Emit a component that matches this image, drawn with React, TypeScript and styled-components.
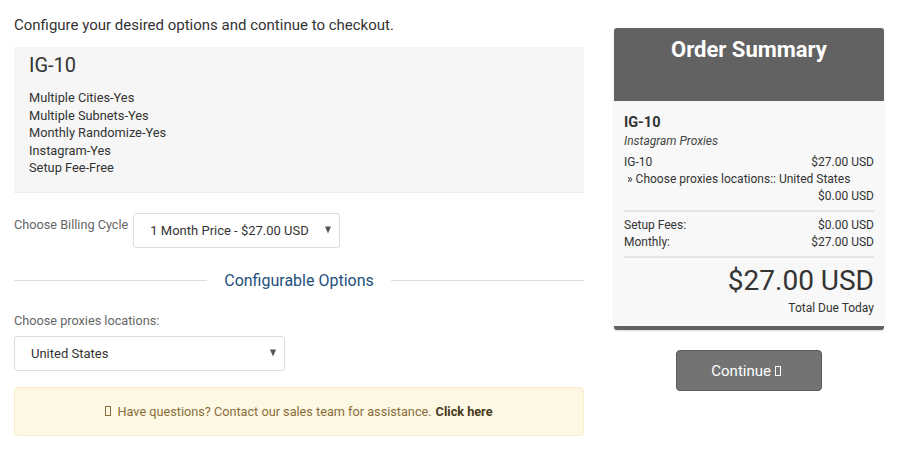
import React from "react";
import styled, { createGlobalStyle } from "styled-components";

const Global = createGlobalStyle`
  html, body { margin: 0; padding: 0; background: #fff; }
  body { font-family: Roboto, "Noto Sans", Arial, sans-serif; color: #333; }
  * { box-sizing: border-box; }
`;

const Page = styled.div`
  display: flex;
  gap: 30px;
  padding: 14px 16px 0 14px;
  width: 900px;
`;

const Main = styled.div`
  width: 570px;
  display: flex;
  flex-direction: column;
`;

const Intro = styled.p`
  margin: 0 0 11px;
  font-size: 15px;
  line-height: 22px;
  color: #333;
`;

const ProductBox = styled.div`
  background: #f6f6f6;
  padding: 4px 15px 15px;
  border-bottom: 1px solid #eee;
`;

const ProductName = styled.h2`
  margin: 0 0 10px;
  font-size: 20px;
  font-weight: 400;
  line-height: 28px;
  color: #333;
`;

const Feature = styled.div`
  font-size: 12.8px;
  line-height: 17.5px;
  color: #333;
`;

const BillingRow = styled.div`
  display: flex;
  align-items: flex-start;
  margin-top: 20px;
`;

const FieldLabel = styled.label`
  font-size: 12.7px;
  color: #666;
  line-height: 18px;
  margin-top: 3px;
  margin-right: 5px;
`;

const SelectBox = styled.div<{ $w: number }>`
  position: relative;
  width: ${(p) => p.$w}px;
  height: 35px;
  border: 1px solid #ddd;
  border-radius: 3px;
  background: #fff;
  display: flex;
  align-items: center;
  padding-left: 16px;
  font-size: 13px;
  color: #333;
`;

const Caret = styled.span`
  position: absolute;
  right: 8px;
  top: 50%;
  transform: translateY(-50%);
  width: 0;
  height: 0;
  border-left: 3.5px solid transparent;
  border-right: 3.5px solid transparent;
  border-top: 7px solid #555;
`;

const Divider = styled.div`
  display: flex;
  align-items: center;
  gap: 17px;
  margin-top: 23px;
  height: 20px;
`;

const Rule = styled.div`
  flex: 1;
  height: 1px;
  background: #ddd;
`;

const DividerTitle = styled.span`
  font-size: 16px;
  color: #1d4f7c;
`;

const LocLabel = styled.div`
  font-size: 12.7px;
  color: #666;
  line-height: 18px;
  margin-top: 21px;
  margin-bottom: 6px;
`;

const Alert = styled.div`
  margin-top: 16px;
  height: 49px;
  background: #fcf8e3;
  border: 1px solid #faebcc;
  border-radius: 4px;
  display: flex;
  align-items: center;
  justify-content: center;
  font-size: 12.7px;
  color: #8a6d3b;
`;

const Strong = styled.strong`
  color: #4a3a20;
  font-weight: 700;
  margin-left: 4px;
`;

const Tofu = styled.span<{ $c: string }>`
  display: inline-block;
  width: 6px;
  height: 10px;
  border: 1px solid ${(p) => p.$c};
  margin: 0 6px 0 0;
  vertical-align: -1px;
`;

const Side = styled.div`
  width: 270px;
  margin-top: 14px;
  display: flex;
  flex-direction: column;
  align-items: center;
`;

const Summary = styled.div`
  width: 270px;
  border-radius: 3px;
  overflow: hidden;
  background: #f8f8f8;
  border-bottom: 4px solid #626262;
  box-shadow: 0 1px 2px rgba(0, 0, 0, 0.15);
`;

const SummaryHead = styled.div`
  background: #626262;
  height: 73px;
  color: #fff;
  text-align: center;
  font-size: 22px;
  font-weight: 700;
  padding-top: 8px;
  line-height: 28px;
`;

const SummaryBody = styled.div`
  padding: 12px 10px 10px;
  font-size: 12px;
  color: #333;
`;

const SumTitle = styled.div`
  font-size: 14.5px;
  font-weight: 700;
  line-height: 19px;
`;

const SumSub = styled.div`
  font-style: italic;
  font-size: 12px;
  color: #444;
  line-height: 18px;
  margin-bottom: 4px;
`;

const Line = styled.div<{ $indent?: boolean }>`
  display: flex;
  justify-content: space-between;
  line-height: 17px;
  font-size: 12px;
  padding-left: ${(p) => (p.$indent ? "3px" : "0")};
`;

const Sep = styled.div`
  height: 2px;
  background: #e4e4e4;
  margin: 5px 0 5px;
`;

const Total = styled.div`
  text-align: right;
  font-size: 28px;
  line-height: 34px;
  margin-top: 6px;
  color: #333;
`;

const TotalLabel = styled.div`
  text-align: right;
  font-size: 12px;
  line-height: 16px;
  margin-top: 2px;
`;

const ContinueBtn = styled.button`
  margin-top: 20px;
  width: 146px;
  height: 41px;
  background: #737373;
  border: 1px solid #5a5a5a;
  border-radius: 4px;
  color: #fff;
  font-family: inherit;
  font-size: 15px;
  display: flex;
  align-items: center;
  justify-content: center;
`;

const features = [
  "Multiple Cities-Yes",
  "Multiple Subnets-Yes",
  "Monthly Randomize-Yes",
  "Instagram-Yes",
  "Setup Fee-Free",
];

export default function App() {
  return (
    <>
      <Global />
      <Page>
        <Main>
          <Intro>Configure your desired options and continue to checkout.</Intro>
          <ProductBox>
            <ProductName>IG-10</ProductName>
            {features.map((f) => (
              <Feature key={f}>{f}</Feature>
            ))}
          </ProductBox>
          <BillingRow>
            <FieldLabel>Choose Billing Cycle</FieldLabel>
            <SelectBox $w={207}>
              1 Month Price - $27.00 USD
              <Caret />
            </SelectBox>
          </BillingRow>
          <Divider>
            <Rule />
            <DividerTitle>Configurable Options</DividerTitle>
            <Rule />
          </Divider>
          <LocLabel>Choose proxies locations:</LocLabel>
          <SelectBox $w={271}>
            United States
            <Caret />
          </SelectBox>
          <Alert>
            <Tofu $c="#8a6d3b" />
            Have questions? Contact our sales team for assistance.
            <Strong>Click here</Strong>
          </Alert>
        </Main>
        <Side>
          <Summary>
            <SummaryHead>Order Summary</SummaryHead>
            <SummaryBody>
              <SumTitle>IG-10</SumTitle>
              <SumSub>Instagram Proxies</SumSub>
              <Line>
                <span>IG-10</span>
                <span>$27.00 USD</span>
              </Line>
              <Line $indent>
                <span>» Choose proxies locations:: United States</span>
              </Line>
              <Line>
                <span />
                <span>$0.00 USD</span>
              </Line>
              <Sep />
              <Line>
                <span>Setup Fees:</span>
                <span>$0.00 USD</span>
              </Line>
              <Line>
                <span>Monthly:</span>
                <span>$27.00 USD</span>
              </Line>
              <Sep />
              <Total>$27.00 USD</Total>
              <TotalLabel>Total Due Today</TotalLabel>
            </SummaryBody>
          </Summary>
          <ContinueBtn>
            Continue&nbsp;
            <Tofu $c="#fff" />
          </ContinueBtn>
        </Side>
      </Page>
    </>
  );
}
